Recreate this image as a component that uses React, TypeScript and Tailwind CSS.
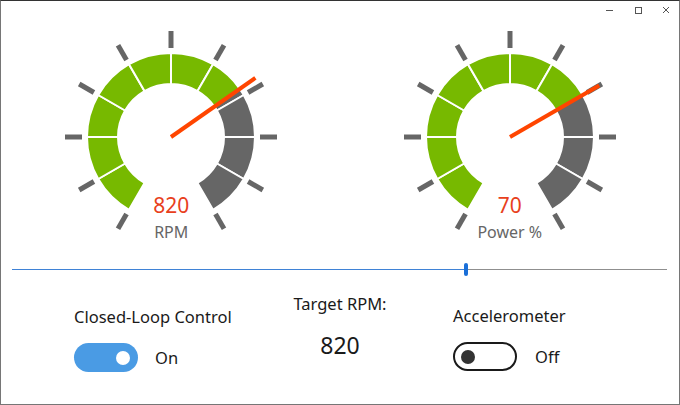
import React from "react";

const CX = 120;
const CY = 110;

function pt(r: number, deg: number): [number, number] {
  const a = (deg * Math.PI) / 180;
  return [CX + r * Math.cos(a), CY - r * Math.sin(a)];
}

function sector(a0: number, a1: number, rIn: number, rOut: number) {
  const [x0, y0] = pt(rOut, a0);
  const [x1, y1] = pt(rOut, a1);
  const [x2, y2] = pt(rIn, a1);
  const [x3, y3] = pt(rIn, a0);
  return `M${x0} ${y0} A${rOut} ${rOut} 0 0 1 ${x1} ${y1} L${x2} ${y2} A${rIn} ${rIn} 0 0 0 ${x3} ${y3} Z`;
}

const GREEN = "#77b900";
const GRAY = "#666666";

function Gauge({ angle, value, label }: { angle: number; value: string; label: string }) {
  const segs: { a0: number; a1: number; c: string }[] = [];
  for (let i = 0; i < 10; i++) {
    const a0 = 240 - 30 * i;
    const a1 = a0 - 30;
    if (a1 >= angle) segs.push({ a0, a1, c: GREEN });
    else if (a0 <= angle) segs.push({ a0, a1, c: GRAY });
    else {
      segs.push({ a0, a1: angle, c: GREEN });
      segs.push({ a0: angle, a1, c: GRAY });
    }
  }
  const ticks: number[] = [];
  for (let a = -60; a <= 240; a += 30) ticks.push(a);
  const [nx, ny] = pt(103, angle);
  return (
    <div className="relative w-[240px] h-[220px]">
      <svg width="240" height="220" viewBox="0 0 240 220">
        {segs.map((s, i) => (
          <path key={i} d={sector(s.a0, s.a1, 53, 84)} fill={s.c} stroke="#ffffff" strokeWidth={2} />
        ))}
        {ticks.map((a) => {
          const [x1, y1] = pt(89, a);
          const [x2, y2] = pt(106, a);
          return <line key={a} x1={x1} y1={y1} x2={x2} y2={y2} stroke={GRAY} strokeWidth={5} />;
        })}
        <line x1={CX} y1={CY} x2={nx} y2={ny} stroke="#ff4500" strokeWidth={4} />
      </svg>
      <div className="absolute left-0 right-0 top-[165px] flex flex-col items-center">
        <div className="text-[21px] leading-[26px] text-[#e8401c]">{value}</div>
        <div className="mt-[2px] text-[16px] leading-[24px] text-[#666666]">{label}</div>
      </div>
    </div>
  );
}

function Toggle({ on }: { on: boolean }) {
  return on ? (
    <div className="w-[64px] h-[29px] rounded-full bg-[#4a9be4] flex items-center justify-end pr-[8px]">
      <div className="w-[14px] h-[14px] rounded-full bg-white" />
    </div>
  ) : (
    <div className="w-[64px] h-[29px] rounded-full border-[2.5px] border-[#1a1a1a] bg-white flex items-center pl-[6px]">
      <div className="w-[14px] h-[14px] rounded-full bg-[#333333]" />
    </div>
  );
}

export default function App() {
  return (
    <div className="w-[680px] h-[405px] border border-[#767676] border-t-[#333333] bg-white flex flex-col font-['Segoe_UI','Noto_Sans',sans-serif] text-[#1a1a1a] overflow-hidden">
      <div className="h-[26px] flex justify-end items-start">
        <div className="w-[28px] h-[18px] flex items-center justify-center">
          <svg width="8" height="8" viewBox="0 0 8 8">
            <line x1="0" y1="4.5" x2="7" y2="4.5" stroke="#555" strokeWidth="1" />
          </svg>
        </div>
        <div className="w-[28px] h-[18px] flex items-center justify-center">
          <svg width="8" height="8" viewBox="0 0 8 8">
            <rect x="1.5" y="1.5" width="6" height="6" fill="none" stroke="#555" strokeWidth="1" />
          </svg>
        </div>
        <div className="w-[27px] h-[18px] flex items-center justify-center">
          <svg width="8" height="8" viewBox="0 0 8 8">
            <line x1="1" y1="1" x2="7" y2="7" stroke="#555" strokeWidth="1" />
            <line x1="7" y1="1" x2="1" y2="7" stroke="#555" strokeWidth="1" />
          </svg>
        </div>
      </div>

      <div className="flex pl-[1px]">
        <div className="w-[340px] flex justify-center">
          <Gauge angle={35} value="820" label="RPM" />
        </div>
        <div className="w-[340px] flex justify-center">
          <Gauge angle={30} value="70" label="Power %" />
        </div>
      </div>

      <div className="mt-[15px] h-[14px] flex items-center pl-[11px]">
        <div className="w-[452px] h-[1px] bg-[#3f82d6]" />
        <div className="w-[4px] h-[13px] rounded-[2px] bg-[#1a6fd8]" />
        <div className="w-[199px] h-[1px] bg-[#8f8f8f]" />
      </div>

      <div className="mt-[14px] flex items-start pl-[73px]">
        <div className="w-[216px] pt-[15px] flex flex-col items-start">
          <div className="text-[16.5px] leading-[24px]">Closed-Loop Control</div>
          <div className="mt-[14px] flex items-center">
            <Toggle on={true} />
            <span className="ml-[17px] text-[16.5px] leading-[24px]">On</span>
          </div>
        </div>
        <div className="w-[100px] pt-[2px] flex flex-col items-center">
          <div className="text-[16.5px] leading-[24px]">Target RPM:</div>
          <div className="mt-[13px] text-[23px] leading-[32px]">820</div>
        </div>
        <div className="ml-[63px] pt-[14px] flex flex-col items-start">
          <div className="text-[16.5px] leading-[24px]">Accelerometer</div>
          <div className="mt-[14px] flex items-center">
            <Toggle on={false} />
            <span className="ml-[18px] text-[16.5px] leading-[24px]">Off</span>
          </div>
        </div>
      </div>
    </div>
  );
}
